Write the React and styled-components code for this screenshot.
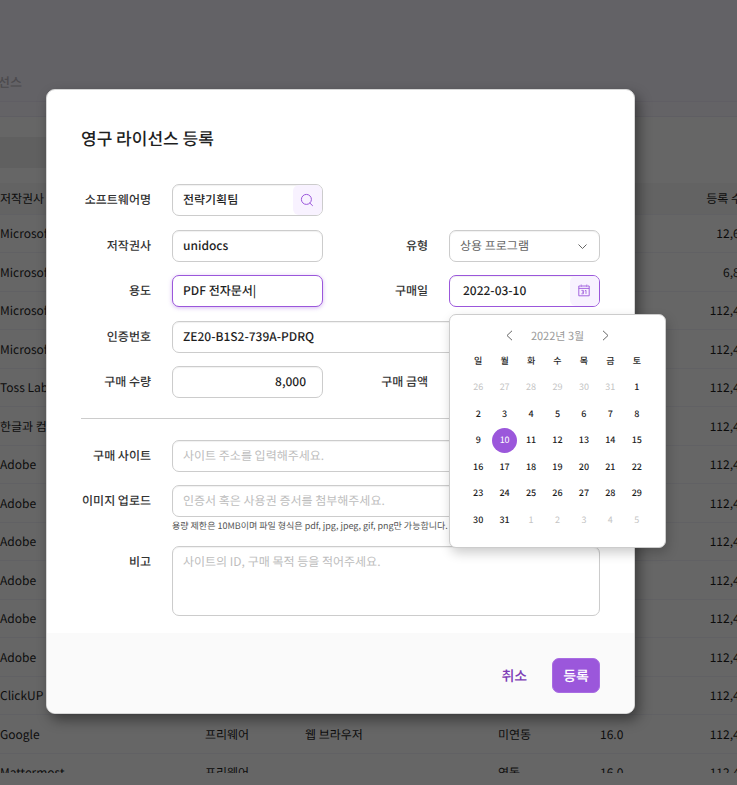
import React from "react";
import styled, { createGlobalStyle, css } from "styled-components";

const GlobalStyle = createGlobalStyle`
  * { box-sizing: border-box; }
  body {
    margin: 0;
    overflow: hidden;
    color: #1f1f1f;
    font-family: "Noto Sans CJK KR", "Noto Sans", sans-serif;
    font-size: 12px;
    line-height: 18px;
    text-rendering: geometricPrecision;
  }
  button, input, select, textarea { font: inherit; color: inherit; text-rendering: inherit; }
`;

const violet = "#9b57db";

/* ---------- page behind the dialog ---------- */

const Page = styled.div`
  position: relative;
  min-height: 100vh;
  overflow: hidden;
  background: #fff;
`;

const TopBar = styled.header`
  height: 102px;
  padding-top: 73px;
  border-bottom: 1px solid #efecfa;
  background: #f8f4ff;
`;

const Crumb = styled.h2`
  display: flex;
  justify-content: flex-end;
  width: 22px;
  margin: 0;
  color: #bdbac2;
  font-size: 13px;
  font-weight: 500;
  white-space: nowrap;
`;

const SubBar = styled.div`
  height: 15px;
  border-bottom: 1px solid #eeebf7;
  background: #f9f7ff;
`;

const FilterArea = styled.div`
  height: 66px;
  padding-top: 20px;
`;

const FilterBox = styled.div`
  width: 120px;
  height: 31px;
  background: #efefef;
`;

const TableClip = styled.div`
  height: 590px;
  overflow: hidden;
`;

const List = styled.table`
  width: calc(100% + 16px);
  border-collapse: collapse;
  table-layout: fixed;
  white-space: nowrap;

  th, td {
    padding: 2px 0 0;
    text-align: left;
    font-weight: 400;
    border-bottom: 1px solid #f3f3f9;
  }
  th { height: 31px; background: #f7f7f7; }
  tbody tr { height: 38px; }
  tbody tr:nth-child(even) { height: 39px; }
  th:last-child, td:last-child { text-align: right; }
`;

const Col = styled.col`
  width: ${(p) => p.$w};
`;

const Counts = styled.div`
  display: flex;
  b { margin-left: auto; font-weight: 400; }
`;

/* ---------- dialog ---------- */

const Scrim = styled.div`
  position: absolute;
  inset: 0;
  padding: 89px 102px 0 46px;
  background: rgba(0, 0, 0, 0.6);
`;

const Dialog = styled.form`
  border: 1px solid #d6d6d6;
  border-radius: 9px;
  background: #fff;
  box-shadow: 4px 6px 13px rgba(0, 0, 0, 0.42);
`;

const DialogBody = styled.div`
  padding: 34px 34px 17px;
`;

const Title = styled.h1`
  margin: 0 0 32px;
  font-size: 17px;
  line-height: 28px;
  font-weight: 500;
`;

const Fields = styled.div`
  display: grid;
  grid-template-columns: 70px 1fr 84px 1fr;
  column-gap: 21px;
  align-content: space-between;
  min-height: ${(p) => p.$minHeight || 0};
`;

const Label = styled.label`
  padding-top: 7px;
  text-align: right;
  white-space: nowrap;
  font-weight: 500;
  color: #333;
  grid-column-start: ${(p) => p.$start || "auto"};
`;

const Field = styled.div`
  position: relative;
  min-width: 0;
  grid-column-end: ${(p) => (p.$wide ? "span 3" : "auto")};
`;

const outline = css`
  width: 100%;
  border: 1px solid ${(p) => (p.$active ? violet : "#ccc")};
  border-radius: 7px;
  outline: none;
  background: #fff;
  box-shadow: ${(p) =>
    p.$glow
      ? "0 1px 4px rgba(155, 87, 219, 0.4)"
      : "inset 0 1px 1px rgba(0, 0, 0, 0.06)"};
  &::placeholder { color: #bdbdbd; opacity: 1; font-weight: 400; }
`;

const TextInput = styled.input`
  ${outline}
  display: block;
  height: 32px;
  padding: 0 ${(p) => (p.$right ? "16px" : "10px")} 1px;
  padding-left: ${(p) => (p.$indent ? "13px" : "10px")};
  text-align: ${(p) => (p.$right ? "right" : "left")};
  font-weight: 500;
`;

const Memo = styled.textarea`
  ${outline}
  display: block;
  height: 70px;
  padding: 6px 10px;
  resize: none;
`;

const Select = styled.select`
  ${outline}
  display: block;
  height: 32px;
  padding: 0 10px;
  appearance: none;
  color: #666;
`;

const SelectArrow = styled.svg`
  position: absolute;
  top: 11px;
  right: 12px;
  pointer-events: none;
`;

const FieldButton = styled.button`
  position: absolute;
  top: 1px;
  right: 1px;
  display: grid;
  place-items: center;
  width: 29px;
  height: 30px;
  padding: 0 1px 1px 0;
  border: 0;
  border-radius: 6px;
  background: #f8f2ff;
  color: ${violet};
`;

const Hint = styled.p`
  margin: 2px 0 0;
  color: #555;
  font-size: 9px;
  line-height: 14px;
`;

const Divider = styled.hr`
  margin: 20px 0 21px;
  border: 0;
  border-top: 1px solid #ccc;
`;

const LowerFields = styled(Fields)`
  row-gap: 13px;
`;

const DialogFooter = styled.footer`
  display: flex;
  justify-content: flex-end;
  align-items: center;
  gap: 14px;
  height: 80px;
  padding: 4px 34px 0;
  border-radius: 0 0 8px 8px;
  background: #fafafa;
`;

const Action = styled.button`
  height: 35px;
  padding: 2px 10px 0;
  border: 1px solid ${(p) => (p.$primary ? "#a86ce2" : "transparent")};
  border-radius: 7px;
  background: ${(p) => (p.$primary ? violet : "transparent")};
  color: ${(p) => (p.$primary ? "#fff" : "#7d3cb5")};
  font-size: 14px;
  font-weight: 500;
`;

/* ---------- calendar ---------- */

const Popup = styled.div`
  position: absolute;
  z-index: 2;
  top: 39px;
  left: 0;
  width: 217px;
  padding: 10px 15px 14px;
  border: 1px solid #ccc;
  border-radius: 7px;
  background: #fff;
  box-shadow: 2px 5px 12px rgba(0, 0, 0, 0.2);
`;

const MonthBar = styled.div`
  display: flex;
  justify-content: center;
  align-items: center;
  gap: 14px;
  height: 22px;
  margin-bottom: 1px;
  color: #999;
  font-size: 11px;
`;

const MonthButton = styled.button`
  display: grid;
  place-items: center;
  width: 14px;
  height: 20px;
  padding: 0 0 2px;
  border: 0;
  background: none;
  color: #666;
`;

const Days = styled.table`
  width: 100%;
  border-collapse: collapse;
  table-layout: fixed;
  font-size: 9px;
  line-height: 12px;
  th, td { height: 26px; padding: 0; text-align: center; font-weight: 500; }
  tr:nth-child(even) td { height: 27px; }
`;

const Day = styled.button`
  display: block;
  width: 25px;
  height: 25px;
  margin: 0 auto;
  padding: 0;
  border: 0;
  border-radius: 50%;
  background: ${(p) => (p.$picked ? violet : "none")};
  color: ${(p) => (p.$picked ? "#fff" : p.$faint ? "#c4c4c4" : "#1f1f1f")};
  font-weight: ${(p) => (p.$faint || p.$picked ? 400 : 500)};
`;

const SearchIcon = () => (
  <svg width="14" height="14" viewBox="0 0 14 14" fill="none" stroke="currentColor" aria-hidden="true">
    <circle cx="6.4" cy="6.4" r="5" />
    <path d="M10 10.2l2.5 2.4" strokeLinecap="round" />
  </svg>
);

const CalendarIcon = () => (
  <svg width="12" height="13" viewBox="0 0 12 13" fill="none" stroke="currentColor" aria-hidden="true">
    <path d="M2.6 2H.8v9.8h10.4V2H9.4M3.8 2h4.4M.8 4.4h10.4M3.2.6v2.4M8.8.6v2.4" strokeWidth=".9" />
    <path d="M3.4 6.4h2v3.4h-2M4 8.1h1.4M6.8 7l1.2-.7v3.6" strokeWidth=".8" />
  </svg>
);

const Chevron = ({ left }) => (
  <svg width="7" height="11" viewBox="0 0 7 11" fill="none" stroke="currentColor" aria-hidden="true">
    <path d={left ? "M6 .8L1 5.5l5 4.7" : "M1 .8l5 4.7-5 4.7"} />
  </svg>
);

const vendors = [
  "Microsoft", "Microsoft", "Microsoft", "Microsoft", "Toss Lab", "한글과 컴퓨터",
  "Adobe", "Adobe", "Adobe", "Adobe", "Adobe", "Adobe", "ClickUP", "Google", "Mattermost",
];
const counts = { 0: "12,650", 1: "6,850" };

const weekdays = ["일", "월", "화", "수", "목", "금", "토"];
const dates = [
  26, 27, 28, 29, 30, 31,
  ...Array.from({ length: 31 }, (_, i) => i + 1),
  1, 2, 3, 4, 5,
];
const weeks = Array.from({ length: 6 }, (_, w) => dates.slice(w * 7, w * 7 + 7));

function Calendar() {
  return (
    <Popup>
      <MonthBar>
        <MonthButton type="button" aria-label="이전 달"><Chevron left /></MonthButton>
        <span>2022년 3월</span>
        <MonthButton type="button" aria-label="다음 달"><Chevron /></MonthButton>
      </MonthBar>
      <Days>
        <thead>
          <tr>{weekdays.map((d) => <th key={d} scope="col">{d}</th>)}</tr>
        </thead>
        <tbody>
          {weeks.map((week, w) => (
            <tr key={w}>
              {week.map((d, i) => {
                const index = w * 7 + i;
                return (
                  <td key={i}>
                    <Day type="button" $faint={index < 6 || index > 36} $picked={index === 15}>{d}</Day>
                  </td>
                );
              })}
            </tr>
          ))}
        </tbody>
      </Days>
    </Popup>
  );
}

function LicenseList() {
  return (
    <TableClip>
      <List>
        <colgroup>
          <Col $w="205px" /><Col $w="100px" /><Col $w="193px" /><Col $w="102px" /><Col $w="auto" />
        </colgroup>
        <thead>
          <tr><th>저작권사</th><th /><th /><th /><th>등록 수량</th></tr>
        </thead>
        <tbody>
          {vendors.map((vendor, i) => (
            <tr key={i}>
              <td>{vendor}</td>
              <td>{i > 12 && "프리웨어"}</td>
              <td>{i === 13 && "웹 브라우저"}</td>
              <td>{i === 13 ? "미연동" : i === 14 && "연동"}</td>
              <td><Counts>{i > 12 && <span>16.0</span>}<b>{counts[i] || "112,450"}</b></Counts></td>
            </tr>
          ))}
        </tbody>
      </List>
    </TableClip>
  );
}

export default function App() {
  return (
    <>
      <GlobalStyle />
      <Page>
        <TopBar><Crumb>선스</Crumb></TopBar>
        <SubBar />
        <FilterArea><FilterBox /></FilterArea>
        <LicenseList />
        <Scrim>
          <Dialog role="dialog" aria-labelledby="title">
            <DialogBody>
              <Title id="title">영구 라이선스 등록</Title>
              <Fields $minHeight="214px">
                <Label htmlFor="name">소프트웨어명</Label>
                <Field>
                  <TextInput id="name" defaultValue="전략기획팀" />
                  <FieldButton type="button" aria-label="검색"><SearchIcon /></FieldButton>
                </Field>

                <Label htmlFor="vendor" $start="1">저작권사</Label>
                <Field><TextInput id="vendor" defaultValue="unidocs" /></Field>
                <Label htmlFor="type">유형</Label>
                <Field>
                  <Select id="type" defaultValue="상용 프로그램"><option>상용 프로그램</option></Select>
                  <SelectArrow width="11" height="11" viewBox="0 0 11 11" fill="none" stroke="#666" aria-hidden="true">
                    <path d="M1.5 3.5l4 4 4-4" />
                  </SelectArrow>
                </Field>

                <Label htmlFor="usage" $start="1">용도</Label>
                <Field><TextInput id="usage" $active $glow defaultValue="PDF 전자문서|" /></Field>
                <Label htmlFor="date">구매일</Label>
                <Field>
                  <TextInput id="date" $active $indent defaultValue="2022-03-10" />
                  <FieldButton type="button" aria-label="달력"><CalendarIcon /></FieldButton>
                  <Calendar />
                </Field>

                <Label htmlFor="serial" $start="1">인증번호</Label>
                <Field $wide><TextInput id="serial" defaultValue="ZE20-B1S2-739A-PDRQ" /></Field>

                <Label htmlFor="amount" $start="1">구매 수량</Label>
                <Field><TextInput id="amount" $right defaultValue="8,000" /></Field>
                <Label htmlFor="price">구매 금액</Label>
                <Field><TextInput id="price" $right /></Field>
              </Fields>
              <Divider />
              <LowerFields>
                <Label htmlFor="site">구매 사이트</Label>
                <Field $wide><TextInput id="site" placeholder="사이트 주소를 입력해주세요." /></Field>
                <Label htmlFor="upload" $start="1">이미지 업로드</Label>
                <Field $wide>
                  <TextInput id="upload" placeholder="인증서 혹은 사용권 증서를 첨부해주세요." />
                  <Hint>용량 제한은 10MB이며 파일 형식은 pdf, jpg, jpeg, gif, png만 가능합니다.</Hint>
                </Field>
                <Label htmlFor="memo" $start="1">비고</Label>
                <Field $wide><Memo id="memo" placeholder="사이트의 ID, 구매 목적 등을 적어주세요." /></Field>
              </LowerFields>
            </DialogBody>
            <DialogFooter>
              <Action type="button">취소</Action>
              <Action type="button" $primary>등록</Action>
            </DialogFooter>
          </Dialog>
        </Scrim>
      </Page>
    </>
  );
}
